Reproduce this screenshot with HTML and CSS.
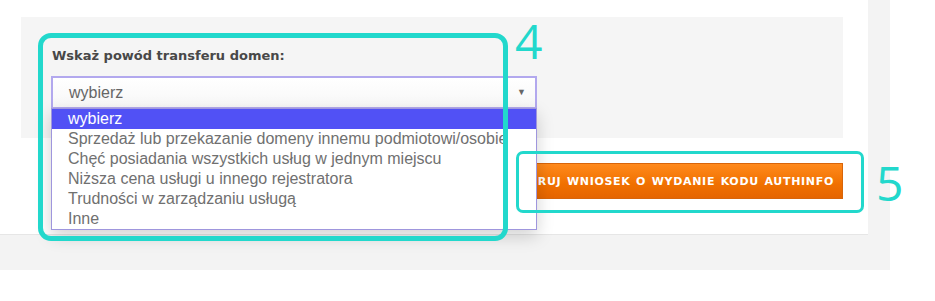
FILE: index.html
```html
<!DOCTYPE html>
<html lang="pl">
<head>
<meta charset="utf-8">
<title>Transfer domen</title>
<link rel="stylesheet" href="styles.css">
</head>
<body>
<div class="page">
  <div class="card">
    <div class="panel">
      <div class="field-label">Wskaż powód transferu domen:</div>
      <div class="select">
        <div class="select-box"><span class="select-value">wybierz</span><span class="arrow">▼</span></div>
        <ul class="options">
          <li class="option selected">wybierz</li>
          <li class="option">Sprzedaż lub przekazanie domeny innemu podmiotowi/osobie</li>
          <li class="option">Chęć posiadania wszystkich usług w jednym miejscu</li>
          <li class="option">Niższa cena usługi u innego rejestratora</li>
          <li class="option">Trudności w zarządzaniu usługą</li>
          <li class="option">Inne</li>
        </ul>
      </div>
    </div>
    <div class="actions">
      <button class="btn">WYGENERUJ WNIOSEK O WYDANIE KODU AUTHINFO</button>
    </div>
  </div>
  <div class="mark mark-4"></div>
  <span class="num num-4">4</span>
  <div class="mark mark-5"></div>
  <span class="num num-5">5</span>
</div>
</body>
</html>
```
FILE: styles.css
```css
html, body {
  margin: 0;
  padding: 0;
  background: #ffffff;
}

.page {
  position: relative;
  width: 890px;
  height: 270px;
  background: #f3f3f3;
  font-family: "Liberation Sans", Arial, sans-serif;
}

.card {
  width: 868px;
  height: 217px;
  padding-top: 17px;
  background: #ffffff;
  border-bottom: 1px solid #e6e6e6;
}

.panel {
  margin-left: 21px;
  width: 822px;
  height: 121px;
  background: #f5f5f5;
  box-sizing: border-box;
  padding: 32px 0 0 30px;
}

.field-label {
  font-family: "DejaVu Sans", Verdana, sans-serif;
  font-weight: bold;
  font-size: 13px;
  line-height: 14px;
  color: #484848;
  margin-left: 1px;
}

.select {
  position: relative;
  margin-top: 13px;
  width: 486px;
}

.select-box {
  height: 32px;
  box-sizing: border-box;
  border: 2px solid #b2a8ee;
  border-bottom-width: 1px;
  background: linear-gradient(#ffffff, #f7f7f7);
  display: flex;
  align-items: center;
  justify-content: space-between;
  padding: 0 9px 0 16px;
}

.select-value {
  font-size: 16px;
  color: #666666;
}

.arrow {
  font-size: 9px;
  color: #666666;
  margin-top: -2px;
}

.options {
  position: absolute;
  left: 0;
  top: 32px;
  width: 486px;
  margin: 0;
  padding: 0;
  list-style: none;
  background: #ffffff;
  border: 1px solid #9f96dd;
  box-sizing: border-box;
  box-shadow: 0 6px 16px rgba(0, 0, 0, 0.18);
  z-index: 2;
}

.option {
  height: 20px;
  line-height: 20px;
  padding-left: 16px;
  font-size: 16px;
  color: #707070;
  white-space: nowrap;
  overflow: hidden;
}

.option.selected {
  background: #5151f5;
  color: #ffffff;
}

.actions {
  display: flex;
  justify-content: flex-end;
  padding-right: 25px;
  margin-top: 25px;
}

.btn {
  height: 36px;
  padding: 0 8px 0 20px;
  border: 1px solid #d8650a;
  background: linear-gradient(#ff8a1c, #f07000 60%, #e56500);
  color: #ffffff;
  font-family: "DejaVu Sans", Verdana, sans-serif;
  font-weight: bold;
  font-size: 11px;
  letter-spacing: 0.7px;
  word-spacing: 1px;
}

.mark {
  position: absolute;
  border-style: solid;
  border-color: #22d8cc;
  box-sizing: border-box;
  z-index: 3;
}

.mark-4 {
  left: 38px;
  top: 33px;
  width: 470px;
  height: 208px;
  border-width: 5px;
  border-radius: 13px;
}

.mark-5 {
  left: 516px;
  top: 151px;
  width: 348px;
  height: 62px;
  border-width: 3px;
  border-radius: 7px;
}

.num {
  position: absolute;
  font-family: "Open Sans", sans-serif;
  font-weight: 400;
  font-size: 48px;
  line-height: 48px;
  color: #22d8cc;
  z-index: 3;
}

.num-4 {
  left: 515px;
  top: 17px;
}

.num-5 {
  left: 876px;
  top: 159px;
}
```
